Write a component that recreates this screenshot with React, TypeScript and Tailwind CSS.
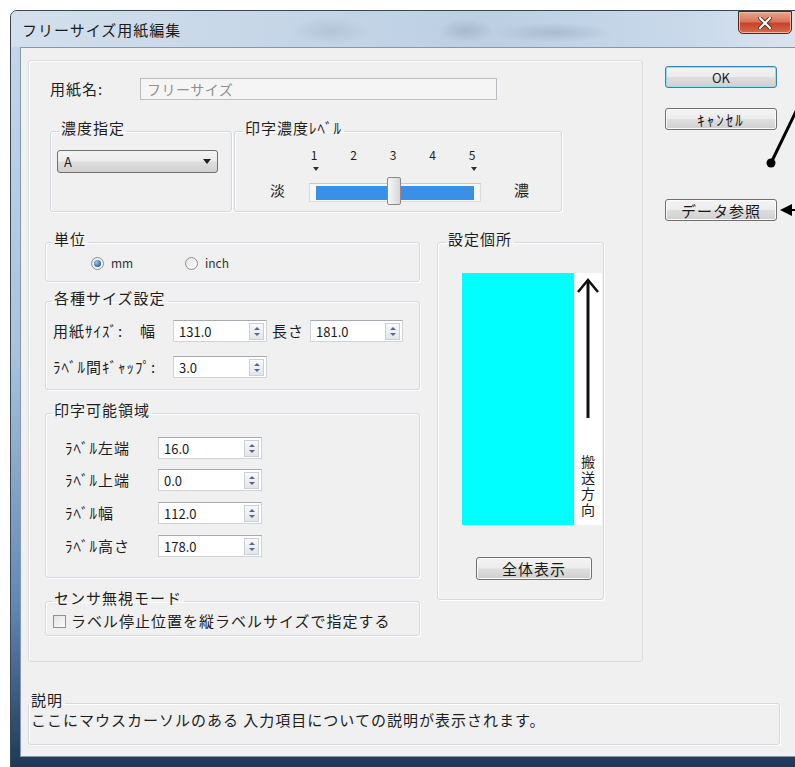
import clsx from "clsx";

type GroupBoxProps = {
  title: string;
  className?: string;
  legendClassName?: string;
  children?: React.ReactNode;
};

// Win7-style etched group box built on fieldset/legend
function GroupBox({ title, className, legendClassName = "ml-[6px]", children }: GroupBoxProps) {
  return (
    <fieldset
      className={clsx(
        "min-w-0 rounded-[3px] border border-[#d3d9df] shadow-[inset_1px_1px_0_#ffffff,1px_1px_0_#ffffff]",
        className
      )}
    >
      <legend
        className={clsx(
          "relative -top-[3px] px-[2px] text-[15px] leading-[16px] tracking-[1px] text-[#1e1e1e]",
          legendClassName
        )}
      >
        {title}
      </legend>
      {children}
    </fieldset>
  );
}

function WinButton({ label, primary = false, className }: { label: string; primary?: boolean; className?: string }) {
  return (
    <button
      type="button"
      className={clsx(
        "flex items-center justify-center rounded-[3px] border leading-none text-[#1a1a1a]",
        "bg-[linear-gradient(180deg,#f4f4f4_0%,#ececec_48%,#dedede_52%,#d0d0d0_100%)]",
        primary
          ? "border-[#3c7fb1] shadow-[inset_0_0_0_1px_#93dcf6]"
          : "border-[#707070] shadow-[inset_0_0_0_1px_#fbfbfb]",
        className
      )}
    >
      {label}
    </button>
  );
}

function SpinField({ value, className }: { value: string; className?: string }) {
  return (
    <div
      className={clsx(
        "flex h-[22px] items-center border border-[#d0d3d7] border-t-[#a8acb2] bg-white pl-[5px] pr-[2px]",
        className
      )}
    >
      <span className="flex-1 text-[13px] leading-none tracking-normal text-[#1a1a1a]">{value}</span>
      <span className="flex h-[17px] w-[15px] flex-col items-center justify-center gap-[3px] border border-[#c9d0d8] bg-[linear-gradient(180deg,#f8f9fb,#e2e6eb)]">
        <span className="h-0 w-0 border-x-[3px] border-b-[3px] border-x-transparent border-b-[#56698a]" />
        <span className="h-0 w-0 border-x-[3px] border-t-[3px] border-x-transparent border-t-[#56698a]" />
      </span>
    </div>
  );
}

function Radio({ checked }: { checked?: boolean }) {
  return (
    <span className="flex h-[13px] w-[13px] items-center justify-center rounded-full border border-[#8e9297] bg-[linear-gradient(135deg,#e6e6e6,#fbfbfb)]">
      {checked ? (
        <span className="h-[7px] w-[7px] rounded-full bg-[radial-gradient(circle_at_35%_35%,#9ecbf2,#2a66b0_70%)]" />
      ) : null}
    </span>
  );
}

const levels = ["1", "2", "3", "4", "5"];

function DensitySlider() {
  return (
    <div className="mt-[9px] flex items-end pl-[35px]">
      <span className="mb-[4px] text-[15px] leading-[16px]">淡</span>
      <div className="ml-[23px] flex w-[172px] flex-col">
        <div className="flex h-[14px] justify-between px-[7px]">
          {levels.map((n) => (
            <span key={n} className="flex w-0 justify-center">
              <span className="-translate-x-[2px] text-[12px] leading-[14px] tracking-normal">{n}</span>
            </span>
          ))}
        </div>
        <div className="mt-[4px] flex h-[6px] justify-between px-[7px]">
          {levels.map((n, i) => (
            <span key={n} className="flex w-0 justify-center">
              {i === 0 || i === levels.length - 1 ? (
                <span className="mt-[1px] h-0 w-0 border-x-[3px] border-t-[4px] border-x-transparent border-t-[#303030]" />
              ) : (
                <span className="h-[5px] w-px bg-[#b8b8b8]" />
              )}
            </span>
          ))}
        </div>
        <div className="relative mt-[11px] h-[19px] border border-[#dcdcdc] border-t-[#c8c8c8] bg-[#f7f7f7]">
          <div className="mx-[6px] mt-[2px] h-[14px] bg-[#3a8fe6]" />
          <div className="absolute left-[77px] top-[-7px] h-[28px] w-[14px] rounded-[2px] border border-[#8a8a8a] bg-[linear-gradient(90deg,#f6f6f6,#e4e4e4_60%,#d6d6d6)]" />
        </div>
      </div>
      <span className="mb-[4px] ml-[33px] text-[15px] leading-[16px]">濃</span>
    </div>
  );
}

const printableRows = [
  { label: "ﾗﾍﾞﾙ左端", value: "16.0", gap: "mt-[16px]" },
  { label: "ﾗﾍﾞﾙ上端", value: "0.0", gap: "mt-[10px]" },
  { label: "ﾗﾍﾞﾙ幅", value: "112.0", gap: "mt-[11px]" },
  { label: "ﾗﾍﾞﾙ高さ", value: "178.0", gap: "mt-[11px]" },
];

export default function App() {
  return (
    <div className="relative h-[767px] w-[795px] overflow-hidden bg-white font-['Noto_Sans_CJK_JP','Noto_Sans_CJK_SC',sans-serif] text-[#1e1e1e]">
      {/* window frame */}
      <div className="ml-[10px] mt-[10px] flex h-[762px] w-[800px] flex-col rounded-t-[7px] border border-[#3b4654] bg-[linear-gradient(180deg,#c6d7ea_0%,#aac2dc_45%,#6189b5_78%,#1d3555_100%)]">
        <div className="flex h-[36px] items-center rounded-tl-[6px] bg-[radial-gradient(ellipse_28px_12px_at_57%_55%,#a7b9cc,transparent),radial-gradient(ellipse_60px_10px_at_68%_60%,#a9bccf,transparent),radial-gradient(ellipse_40px_14px_at_40%_55%,#b2c4d6,transparent),linear-gradient(90deg,#d3dfec_0%,#c7d7e8_30%,#bccfe3_60%,#c9d9ea_85%,#dbe5ef_100%)] pl-[11px]">
          <span className="text-[15px] leading-none tracking-[1px] text-[#1b1b1b]">フリーサイズ用紙編集</span>
          <button
            type="button"
            className="mr-[17px] ml-auto -mt-[13px] flex h-[23px] w-[54px] items-center justify-center rounded-b-[5px] border border-[#5a2218] bg-[linear-gradient(180deg,#eba38e_0%,#d9765c_45%,#c7432a_55%,#d8694c_100%)] shadow-[inset_0_0_0_1px_#f2b8a6]"
          >
            <svg width="14" height="12" viewBox="0 0 14 12">
              <path d="M2 1 L12 11 M12 1 L2 11" stroke="#5a2a22" strokeWidth="4" strokeLinecap="square" />
              <path d="M2 1 L12 11 M12 1 L2 11" stroke="#ffffff" strokeWidth="2.2" strokeLinecap="square" />
            </svg>
          </button>
        </div>

        {/* client area */}
        <div className="ml-[9px] flex h-[710px] w-[780px] flex-col border border-[#8397ad] bg-[#f0f0f0] pl-[7px] pt-[12px] text-[15px] tracking-[1px]">
          <div className="flex items-start">
            <div className="flex h-[602px] w-[615px] flex-col rounded-[3px] border border-[#d9dcdf] shadow-[inset_1px_1px_0_#ffffff]">
              <div className="ml-[21px] mt-[17px] flex h-[22px] items-center">
                <span className="w-[90px]">用紙名:</span>
                <div className="flex h-[22px] w-[357px] items-center border border-[#b9bcc0] bg-[#f5f5f5] pl-[6px] text-[14px] tracking-[0.5px] text-[#909090]">
                  フリーサイズ
                </div>
              </div>

              <div className="ml-[21px] mt-[23px] flex gap-[2px]">
                <GroupBox title="濃度指定" className="h-[89px] w-[182px]" legendClassName="ml-[8px]">
                  <div className="ml-[6px] mt-[11px] flex h-[23px] w-[161px] items-center justify-between rounded-[3px] border border-[#707070] bg-[linear-gradient(180deg,#f4f4f4_0%,#ececec_48%,#dedede_52%,#d0d0d0_100%)] px-[6px] text-[13px]">
                    <span>A</span>
                    <span className="h-0 w-0 border-x-[4px] border-t-[5px] border-x-transparent border-t-[#202020]" />
                  </div>
                </GroupBox>
                <GroupBox title="印字濃度ﾚﾍﾞﾙ" className="h-[89px] w-[328px]" legendClassName="ml-[8px]">
                  <DensitySlider />
                </GroupBox>
              </div>

              <div className="mt-[22px] flex items-start">
                <div className="ml-[16px] flex w-[375px] flex-col">
                  <GroupBox title="単位" className="h-[48px]">
                    <div className="ml-[45px] mt-[6px] flex h-[14px] items-center text-[12px] tracking-normal text-[#333]">
                      <span className="flex w-[94px] items-center gap-[7px]">
                        <Radio checked />
                        <span>mm</span>
                      </span>
                      <span className="flex items-center gap-[7px]">
                        <Radio />
                        <span>inch</span>
                      </span>
                    </div>
                  </GroupBox>

                  <GroupBox title="各種サイズ設定" className="mt-[11px] h-[97px]">
                    <div className="ml-[7px] mt-[11px] flex h-[22px] items-center">
                      <span className="w-[87px]">用紙ｻｲｽﾞ:</span>
                      <span className="w-[33px]">幅</span>
                      <SpinField value="131.0" className="w-[94px]" />
                      <span className="ml-[5px] w-[38px]">長さ</span>
                      <SpinField value="181.0" className="w-[93px]" />
                    </div>
                    <div className="ml-[7px] mt-[14px] flex h-[22px] items-center">
                      <span className="w-[120px]">ﾗﾍﾞﾙ間ｷﾞｬｯﾌﾟ:</span>
                      <SpinField value="3.0" className="w-[94px]" />
                    </div>
                  </GroupBox>

                  <GroupBox title="印字可能領域" className="mt-[15px] h-[173px]">
                    {printableRows.map((row) => (
                      <div key={row.label} className={clsx("ml-[19px] flex h-[22px] items-center", row.gap)}>
                        <span className="w-[93px]">{row.label}</span>
                        <SpinField value={row.value} className="w-[104px]" />
                      </div>
                    ))}
                  </GroupBox>

                  <GroupBox title="センサ無視モード" className="mt-[15px] h-[43px]">
                    <div className="ml-[7px] mt-[5px] flex h-[14px] items-center gap-[5px]">
                      <span className="h-[13px] w-[13px] shrink-0 border border-[#8e9297] bg-[linear-gradient(135deg,#e3e3e3,#fbfbfb)]" />
                      <span className="whitespace-nowrap">ラベル停止位置を縦ラベルサイズで指定する</span>
                    </div>
                  </GroupBox>
                </div>

                <GroupBox title="設定個所" className="ml-[17px] h-[366px] w-[167px]" legendClassName="ml-[8px]">
                  <div className="ml-[24px] mt-[23px] flex h-[252px]">
                    <div className="w-[112px] bg-[#00ffff]" />
                    <div className="flex w-[28px] flex-col items-center bg-white">
                      <svg width="26" height="146" viewBox="0 0 26 146" className="mt-[3px]">
                        <path d="M13 4 V142" stroke="#111" strokeWidth="3" />
                        <path d="M3 16 L13 4 L23 16" fill="none" stroke="#111" strokeWidth="2.5" />
                      </svg>
                      <span className="mb-[6px] mt-auto text-[14px] leading-[14px] tracking-[2px] [writing-mode:vertical-rl]">
                        搬送方向
                      </span>
                    </div>
                  </div>
                  <WinButton label="全体表示" className="ml-[38px] mt-[32px] h-[23px] w-[116px] text-[15px] tracking-[1px]" />
                </GroupBox>
              </div>
            </div>

            <div className="ml-[22px] flex w-[112px] flex-col">
              <WinButton label="OK" primary className="mt-[6px] h-[22px] text-[13px] tracking-normal" />
              <WinButton label="ｷｬﾝｾﾙ" className="mt-[20px] h-[22px] text-[15px] tracking-[2px]" />
              <WinButton label="データ参照" className="mt-[69px] h-[22px] text-[15px] tracking-[1px]" />
            </div>
          </div>

          <GroupBox title="説明" className="mt-[33px] h-[50px] w-[752px]" legendClassName="ml-0">
            <p className="mt-[1px] pl-[2px] leading-[16px]">ここにマウスカーソルのある 入力項目についての説明が表示されます。</p>
          </GroupBox>
        </div>
      </div>

      {/* callout lines drawn over the dialog */}
      <svg className="pointer-events-none absolute left-0 top-0" width="795" height="767" viewBox="0 0 795 767">
        <line x1="771" y1="163" x2="800" y2="103" stroke="#000" strokeWidth="3" />
        <circle cx="771" cy="163" r="4.5" fill="#000" />
        <line x1="788" y1="210" x2="800" y2="210" stroke="#000" strokeWidth="2" />
        <polygon points="780,210 792,204 792,216" fill="#000" />
      </svg>
    </div>
  );
}
